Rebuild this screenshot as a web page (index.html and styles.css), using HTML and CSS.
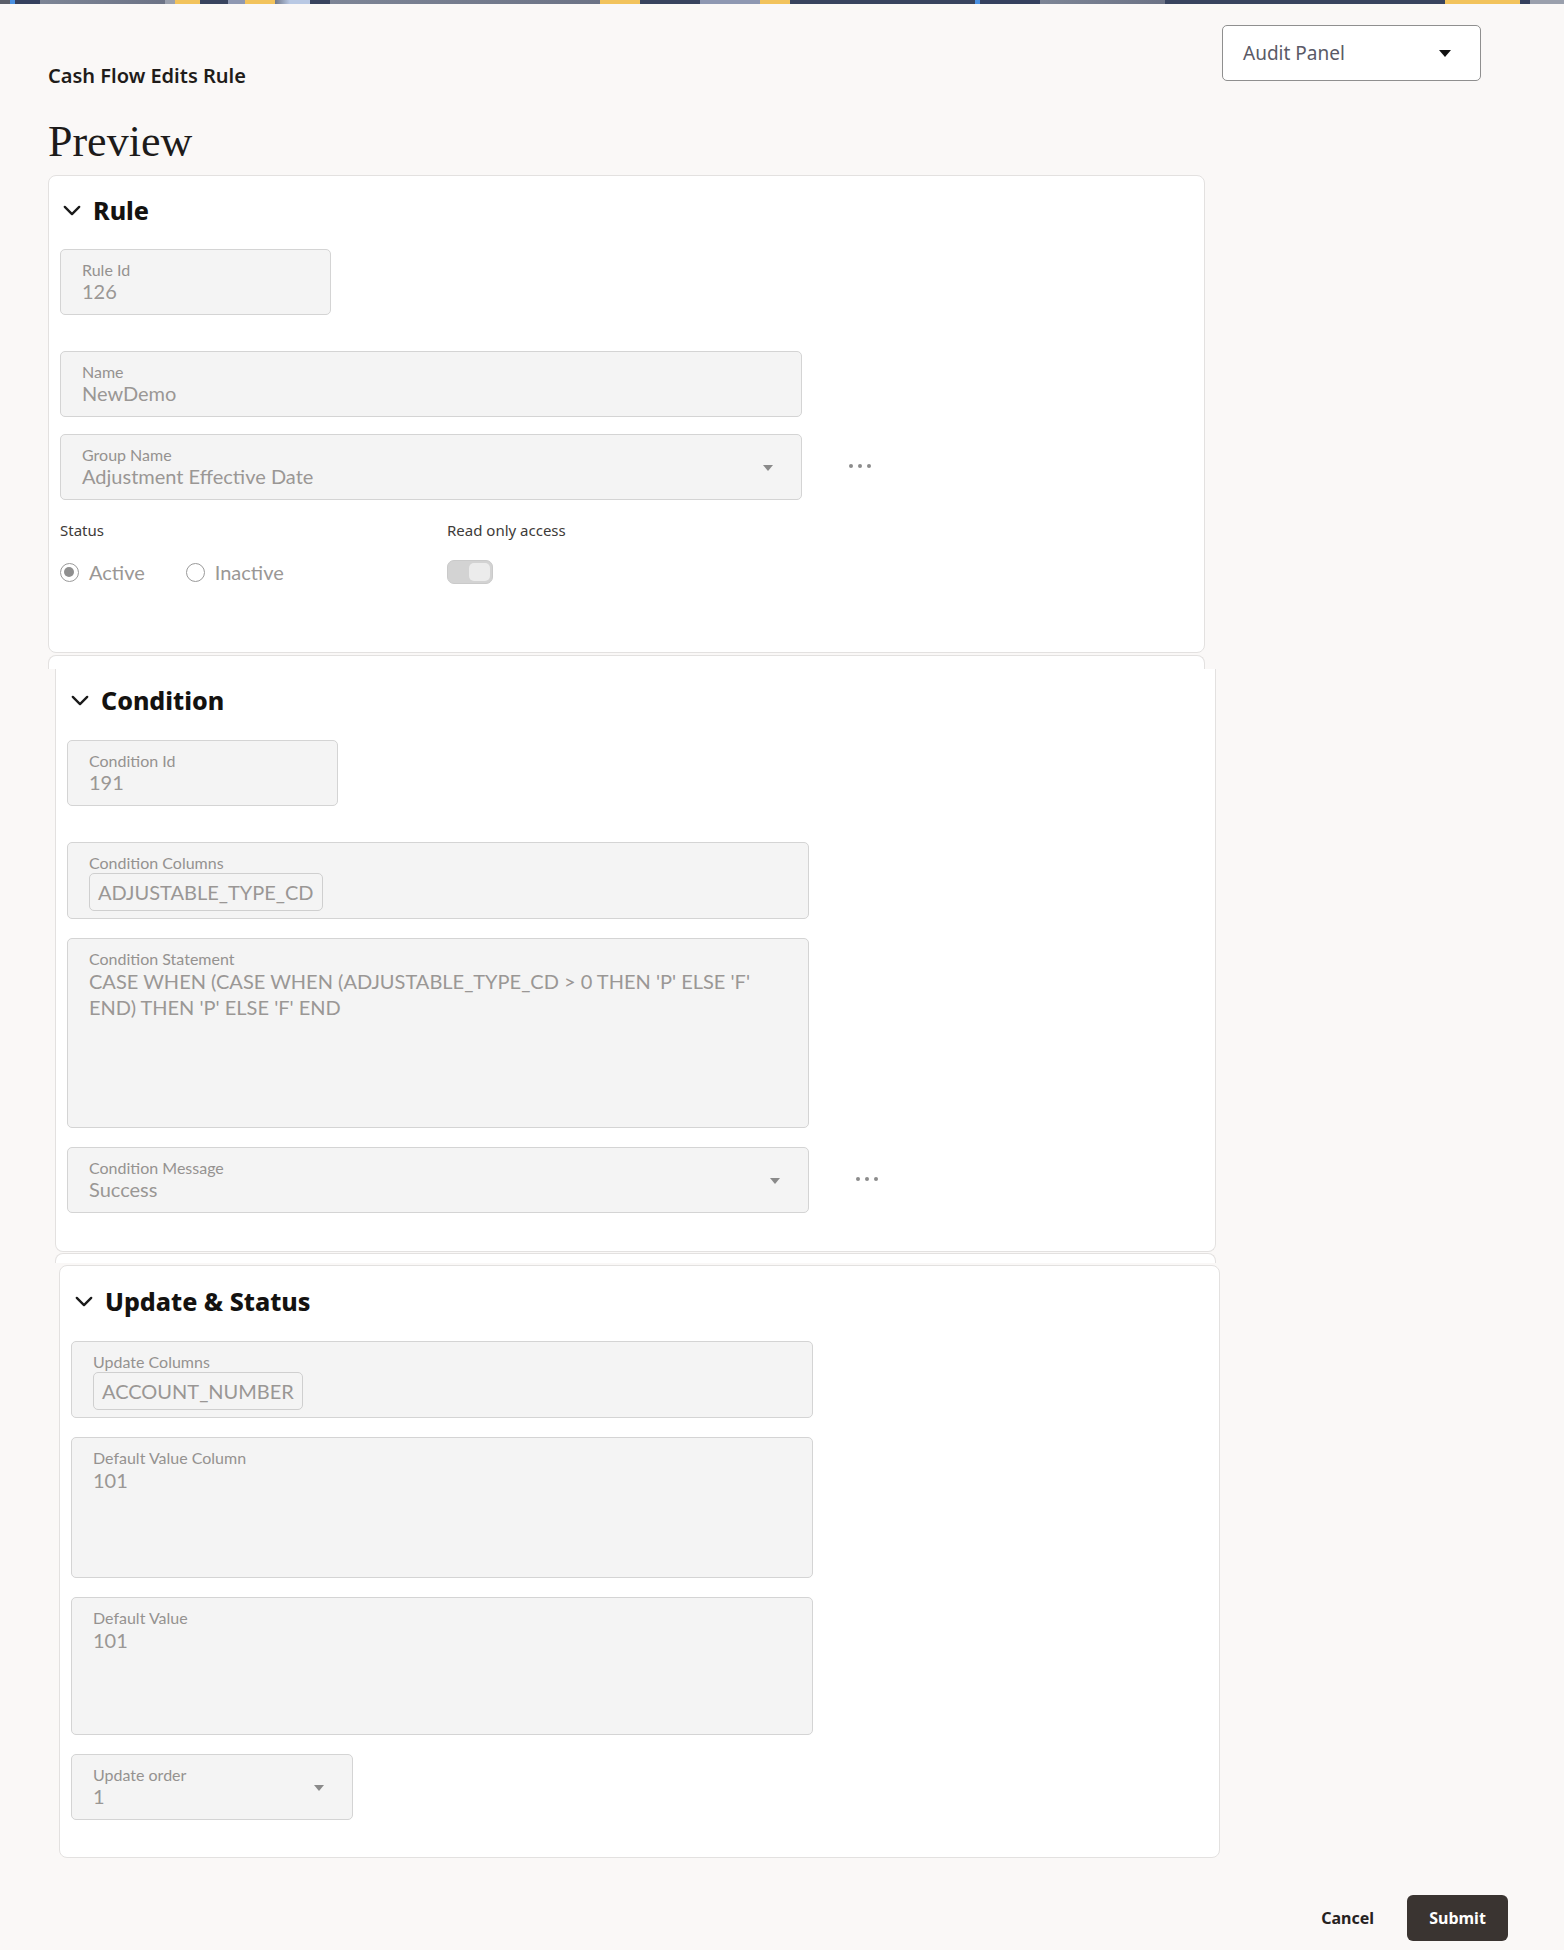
FILE: index.html
```html
<!DOCTYPE html>
<html lang="en">
<head>
<meta charset="UTF-8" />
<meta name="viewport" content="width=device-width, initial-scale=1" />
<title>Cash Flow Edits Rule - Preview</title>
<link rel="stylesheet" href="styles.css">
</head>
<body>

<div class="brand-strip"></div>

<div class="page">
  <header class="page-head">
    <div class="titles">
      <div class="crumb">Cash Flow Edits Rule</div>
      <h1>Preview</h1>
    </div>
    <div class="panel-select">
      <span>Audit Panel</span>
      <span class="caret-dark"></span>
    </div>
  </header>

  <!-- Rule -->
  <section class="card card-rule">
    <h2 class="sec-title">
      <svg class="chev" viewBox="0 0 20 12"><path d="M2 2 L10 10 L18 2" /></svg>
      Rule
    </h2>

    <div class="fld fld-id">
      <div class="fld-label">Rule Id</div>
      <div class="fld-value">126</div>
    </div>

    <div class="fld fld-wide gap-lg">
      <div class="fld-label">Name</div>
      <div class="fld-value">NewDemo</div>
    </div>

    <div class="fld-row gap-sm">
      <div class="fld fld-wide fld-select">
        <div>
          <div class="fld-label">Group Name</div>
          <div class="fld-value">Adjustment Effective Date</div>
        </div>
        <span class="caret"></span>
      </div>
      <span class="more"><i></i><i></i><i></i></span>
    </div>

    <div class="status-row">
      <div class="status-col">
        <div class="opt-label">Status</div>
        <div class="radios">
          <label class="radio on"><span class="dot"></span>Active</label>
          <label class="radio"><span class="dot"></span>Inactive</label>
        </div>
      </div>
      <div class="status-col">
        <div class="opt-label">Read only access</div>
        <div class="radios">
          <span class="toggle"><span class="knob"></span></span>
        </div>
      </div>
    </div>
  </section>

  <div class="card-edge edge-a"></div>

  <!-- Condition -->
  <section class="card card-condition">
    <h2 class="sec-title">
      <svg class="chev" viewBox="0 0 20 12"><path d="M2 2 L10 10 L18 2" /></svg>
      Condition
    </h2>

    <div class="fld fld-id">
      <div class="fld-label">Condition Id</div>
      <div class="fld-value">191</div>
    </div>

    <div class="fld fld-wide fld-chips gap-lg">
      <div class="fld-label">Condition Columns</div>
      <span class="chip">ADJUSTABLE_TYPE_CD</span>
    </div>

    <div class="fld fld-wide fld-area gap-md">
      <div class="fld-label">Condition Statement</div>
      <div class="fld-value">CASE WHEN (CASE WHEN (ADJUSTABLE_TYPE_CD &gt; 0 THEN 'P' ELSE 'F' END) THEN 'P' ELSE 'F' END</div>
    </div>

    <div class="fld-row gap-md">
      <div class="fld fld-wide fld-select">
        <div>
          <div class="fld-label">Condition Message</div>
          <div class="fld-value">Success</div>
        </div>
        <span class="caret"></span>
      </div>
      <span class="more"><i></i><i></i><i></i></span>
    </div>
  </section>

  <div class="card-edge edge-b"></div>

  <!-- Update & Status -->
  <section class="card card-update">
    <h2 class="sec-title">
      <svg class="chev" viewBox="0 0 20 12"><path d="M2 2 L10 10 L18 2" /></svg>
      Update &amp; Status
    </h2>

    <div class="fld fld-wide fld-chips gap-top">
      <div class="fld-label">Update Columns</div>
      <span class="chip">ACCOUNT_NUMBER</span>
    </div>

    <div class="fld fld-wide fld-area area-sm gap-md">
      <div class="fld-label">Default Value Column</div>
      <div class="fld-value">101</div>
    </div>

    <div class="fld fld-wide fld-area area-xs gap-md">
      <div class="fld-label">Default Value</div>
      <div class="fld-value">101</div>
    </div>

    <div class="fld fld-order fld-select gap-md">
      <div>
        <div class="fld-label">Update order</div>
        <div class="fld-value">1</div>
      </div>
      <span class="caret"></span>
    </div>
  </section>

  <footer class="actions">
    <button class="btn-link">Cancel</button>
    <button class="btn-primary">Submit</button>
  </footer>
</div>

</body>
</html>
```

FILE: styles.css
```css
body{margin:0; background:#faf8f7; font-family:"Noto Sans",Arial,sans-serif; color:#1d1b1a;}

/* decorative band across the top */
.brand-strip{height:4px; background:linear-gradient(90deg,
  #5b5f6a 0,#5b5f6a 10px,#4a90e2 10px,#4a90e2 15px,#35415f 15px,#35415f 40px,
  #7d8596 40px,#6c7386 165px,#9aa0ad 165px,#9aa0ad 175px,#f2c35c 175px,#f2c35c 200px,
  #38445f 200px,#38445f 228px,#8e98b2 228px,#8e98b2 245px,#f2c35c 245px,#f2c35c 275px,
  #6f7789 275px,#b9c9e4 290px,#b9c9e4 310px,#38445f 310px,#38445f 330px,#7d8596 330px,
  #6c7386 600px,#f2c35c 600px,#f2c35c 640px,#38445f 640px,#38445f 700px,#8e98b2 700px,
  #8e98b2 760px,#f2c35c 760px,#f2c35c 790px,#38445f 790px,#38445f 975px,#4a90e2 975px,
  #4a90e2 980px,#35415f 980px,#35415f 1040px,#7d8596 1040px,#6c7386 1165px,#38445f 1165px,
  #38445f 1445px,#f2c35c 1445px,#f2c35c 1520px,#35415f 1520px,#35415f 1530px,#9aa0ad 1530px);}

.page{padding:0 0 0 48px;}

.page-head{display:flex; justify-content:space-between; align-items:flex-start; width:1433px; padding-top:21px;}
.crumb{margin-top:37px; font-size:20px; line-height:28px; font-weight:600; color:#1f1c1a;}
h1{margin:27px 0 0; font-family:"Liberation Serif","Times New Roman",serif; font-weight:400; font-size:44px; line-height:50px; color:#1d1b1a;}

.panel-select{display:flex; align-items:center; justify-content:space-between; box-sizing:border-box; width:259px; height:56px; padding:0 29px 0 20px; background:#fff; border:1px solid #8f8f8f; border-radius:5px; font-size:19px; color:#5a5a66;}
.caret-dark{width:0; height:0; border-left:6px solid transparent; border-right:6px solid transparent; border-top:7px solid #111;}

/* cards */
.card{box-sizing:border-box; width:1157px; background:#fff; border:1px solid #e3e1e0; border-radius:8px; padding:0 11px;}
.card-rule{margin-top:8px; padding-top:18px; padding-bottom:68px;}
.card-condition{width:1161px; margin-left:7px; border-top:none; border-radius:0 0 8px 8px; padding-top:15px; padding-bottom:38px;}
.card-update{width:1161px; margin-left:11px; margin-top:2px; padding-top:19px; padding-bottom:37px;}

.card-edge{box-sizing:border-box; width:1157px; background:#fff; border:1px solid #e3e1e0; border-bottom:none; border-radius:8px 8px 0 0;}
.edge-a{height:14px; margin-top:2px;}
.edge-b{width:1161px; height:10px; margin-top:1px; margin-left:7px;}

.sec-title{display:flex; align-items:center; gap:12px; margin:0; padding-left:3px; font-size:25px; line-height:32px; font-weight:800; color:#141210;}
.chev{width:18px; height:11px; fill:none; stroke:#1a1a1a; stroke-width:2.6; stroke-linecap:round; stroke-linejoin:round;}
.card-condition .sec-title{padding-left:4px;}
.card-update .sec-title{padding-left:4px;}

/* read-only form fields */
.fld{box-sizing:border-box; background:#f4f4f4; border:1px solid #d4d4d4; border-radius:5px; padding:11px 21px; font-family:Lato,"Noto Sans",sans-serif;}
.fld-label{font-size:16px; line-height:18px; color:#959290;}
.fld-value{font-size:20px; line-height:24px; color:#9a9795;}
.fld-id{width:271px; height:66px; margin-top:23px;}
.card-condition .fld-id{margin-top:24px;}
.fld-wide{width:742px; min-height:66px;}
.fld-order{width:282px; height:66px;}
.fld-select{display:flex; align-items:center; justify-content:space-between; padding-right:28px;}
.fld-select > div{align-self:flex-start;}
.caret{width:0; height:0; border-left:5px solid transparent; border-right:5px solid transparent; border-top:6px solid #8a8a8a; margin-top:2px;}

.fld-chips{height:77px; padding-bottom:7px;}
.chip{display:inline-block; box-sizing:border-box; height:38px; margin-top:1px; padding:0 8px; border:1px solid #cfcfcf; border-radius:5px; font-size:20px; line-height:36px; color:#9a9795;}
.fld-area{height:190px;}
.fld-area .fld-value{line-height:26px; padding-right:20px;}
.area-sm{height:141px;}
.area-xs{height:138px;}

.gap-top{margin-top:24px;}
.gap-lg{margin-top:36px;}
.gap-md{margin-top:19px;}
.gap-sm{margin-top:17px;}
.card-update .fld-order{margin-top:19px;}

.fld-row{display:flex; align-items:center;}
.more{display:flex; gap:5px; margin-left:47px; margin-top:-3px;}
.more i{width:4px; height:4px; border-radius:50%; background:#8c8c8c;}

/* status + read only */
.status-row{display:flex; margin-top:20px;}
.status-col{width:387px;}
.opt-label{font-size:15px; line-height:20px; color:#3e3b39;}
.radios{display:flex; align-items:center; gap:41px; height:24px; margin-top:20px; font-family:Lato,"Noto Sans",sans-serif; font-size:20px; color:#9a9795;}
.radio{display:flex; align-items:center; gap:10px;}
.radio .dot{box-sizing:border-box; width:19px; height:19px; border:1.5px solid #9a9a9a; border-radius:50%; position:relative;}
.radio.on .dot::after{content:""; position:absolute; left:3px; top:3px; width:10px; height:10px; border-radius:50%; background:#8f8f8f;}
.toggle{box-sizing:border-box; display:flex; justify-content:flex-end; align-items:center; width:46px; height:24px; padding:2px; background:#d3d3d3; border:1px solid #cacaca; border-radius:7px;}
.knob{width:21px; height:18px; background:#ececec; border-radius:5px;}

/* footer buttons */
.actions{display:flex; justify-content:flex-end; align-items:center; gap:33px; width:1460px; margin-top:37px; padding-bottom:9px;}
.btn-link{border:none; background:none; padding:0; font-family:"Noto Sans",Arial,sans-serif; font-size:16px; font-weight:700; color:#26221f; cursor:pointer;}
.btn-primary{width:101px; height:46px; border:none; border-radius:6px; background:#3a3431; color:#fff; font-family:"Noto Sans",Arial,sans-serif; font-size:16px; font-weight:700; cursor:pointer;}
```
